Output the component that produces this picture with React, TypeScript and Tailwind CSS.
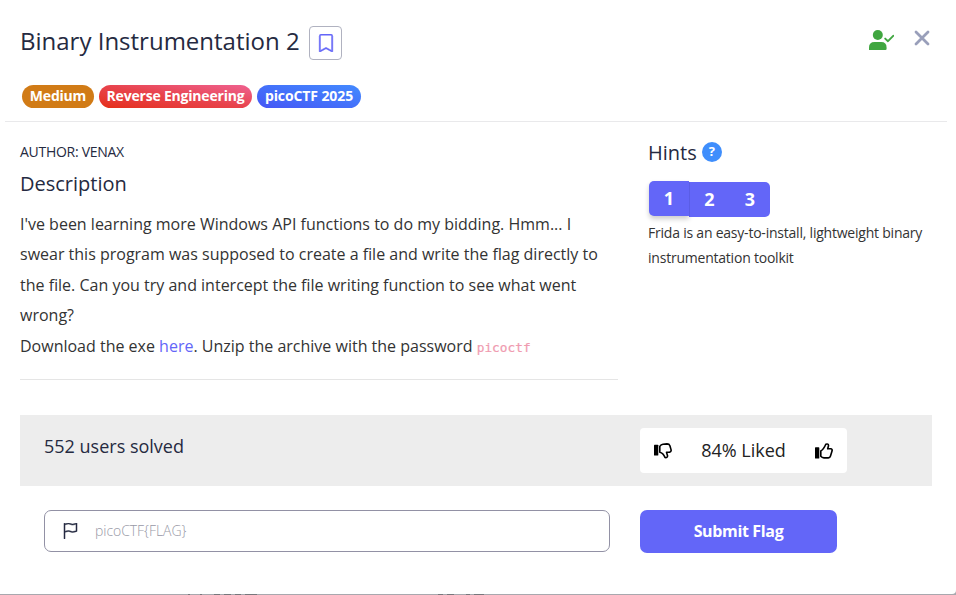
import { BsBookmark, BsFlag } from "react-icons/bs";

function PersonCheck() {
  return (
    <svg className="mt-[5px]" width="25" height="20" viewBox="0 0 25 20" fill="none">
      <circle cx="8.8" cy="5" r="5" fill="#40a640" />
      <path d="M0 20V17.5Q0 12 5.5 12H12.2Q17.6 12 17.6 17.5V18.8Q17.6 20 16.4 20Z" fill="#40a640" />
      <path d="M16.2 8.6 19 11.2 24.2 5.8" stroke="#40a640" strokeWidth="1.9" strokeLinecap="round" strokeLinejoin="round" />
    </svg>
  );
}

function ThumbDown() {
  return (
    <svg width="18" height="18" viewBox="0 0 18 18" fill="none">
      <rect x="0" y="2.7" width="4.3" height="10.8" rx="0.6" fill="#000" />
      <path
        d="M5.8 4.4Q7 2.6 9 2.3L13 1.9Q15.2 1.9 15.9 3.7L17.1 7.9Q17.4 9.7 15.7 10.1L12.5 10.3L13.6 14Q13.3 16.1 11 15.5C9.9 12.8 8.2 10.8 5.8 10.3Z"
        stroke="#000"
        strokeWidth="1.6"
        strokeLinejoin="round"
      />
    </svg>
  );
}

function ThumbUp() {
  return (
    <svg width="18" height="18" viewBox="0 0 18 18" fill="none">
      <rect x="0" y="5.3" width="4.3" height="11.3" rx="0.6" fill="#000" />
      <path
        d="M5.8 8.9C8.2 7.6 9.7 4.8 10.8 2.2Q13.6 1.4 13.5 3.7L12.7 6.8H15.7Q17.5 7 17.1 8.8L15.5 14.1Q15 15.8 13.3 15.9H9Q7 15.6 5.8 14.2Z"
        stroke="#000"
        strokeWidth="1.6"
        strokeLinejoin="round"
      />
    </svg>
  );
}

function Hints() {
  return (
    <aside className="ml-[30px] w-[290px]">
      <h2 className="mt-[19px] flex h-[24px] items-center text-[20px] text-[#252a41]">
        Hints
        <span className="mb-[2px] ml-[5px] flex h-[20px] w-[20px] items-center justify-center rounded-full bg-[#3f8efc] text-[13px] font-bold text-white">
          ?
        </span>
      </h2>
      <div className="mt-[16px] ml-px flex h-[36px] text-[18px] font-bold text-white">
        <button className="h-[35px] w-[40px] rounded-l-[5px] bg-[#6366f8] shadow-[0_3px_5px_rgba(0,0,0,0.2)]">1</button>
        <button className="mt-px h-[35px] w-[41px] bg-[#6366f8] shadow-[inset_1px_0_0_#5a5de6]">2</button>
        <button className="mt-px h-[35px] w-[40px] rounded-r-[5px] bg-[#6366f8]">3</button>
      </div>
      <p className="mt-[3px] text-[14px] leading-[25px] tracking-[-0.22px] text-[#333]">
        Frida is an easy-to-install, lightweight binary
        <br />
        instrumentation toolkit
      </p>
    </aside>
  );
}

export default function App() {
  return (
    <div className="h-[595px] w-[956px] overflow-hidden bg-[#a8a8ae] font-['Open_Sans',sans-serif] text-[#333]">
      <main className="h-[594px] rounded-br-[4px] bg-white">
        <header className="ml-[5px] h-[122px] w-[942px] border-b border-[#e9e9eb] pl-[15px]">
          <div className="flex pt-[25px]">
            <h1 className="h-[34px] w-[279px] text-[24px] leading-[32px] whitespace-nowrap text-[#252a41]">
              Binary Instrumentation 2
            </h1>
            <button className="mt-px ml-[10px] flex h-[34px] w-[33px] items-center justify-center rounded-[4px] border border-[#b0b2c0]">
              <BsBookmark size={18} color="#6366f8" stroke="#6366f8" strokeWidth={0.5} />
            </button>
            <div className="mr-[17px] ml-auto flex">
              <PersonCheck />
              <svg className="mt-[5px] ml-[20px]" width="16" height="16" viewBox="0 0 16 16" stroke="#999fba" strokeWidth="2.8" strokeLinecap="round">
                <path d="M2 2 14 14M14 2 2 14" />
              </svg>
            </div>
          </div>
          <div className="mt-[25px] ml-[2px] flex gap-[5px] text-[14px] leading-[22px] font-bold tracking-[-0.2px] text-white">
            <span className="h-[23px] w-[72px] rounded-full bg-[#d17b16] text-center">Medium</span>
            <span className="h-[23px] w-[153px] rounded-full bg-gradient-to-tr from-[#e52e12] via-[#e8434c] to-[#ef6191] text-center">
              Reverse Engineering
            </span>
            <span className="h-[23px] w-[104px] rounded-full bg-gradient-to-tr from-[#4555f5] to-[#438aff] text-center tracking-[-0.1px]">picoCTF 2025</span>
          </div>
        </header>
        <section className="flex h-[293px] pl-[20px]">
          <article className="h-[258px] w-[598px] border-b border-[#e5e5e5] text-[16px] whitespace-nowrap">
            <p className="mt-[20px] h-[20px] text-[14px] leading-[20px] tracking-[-0.28px] text-[#252a41]">AUTHOR: VENAX</p>
            <h2 className="mt-[9px] h-[26px] text-[20px] leading-[26px] text-[#252a41]">Description</h2>
            <p className="mt-[12px] leading-[30.4px]">
              I've been learning more Windows API functions to do my bidding. Hmm... I<br />
              swear this program was supposed to create a file and write the flag directly to<br />
              the file. Can you try and intercept the file writing function to see what went<br />
              wrong?<br />
              Download the exe <a className="text-[#6366f8]">here</a>. Unzip the archive with the password{" "}
              <code className="font-['DejaVu_Sans_Mono',monospace] text-[12.8px] text-[#f09bb0] [-webkit-text-stroke:0.2px_#f09bb0]">picoctf</code>
            </p>
          </article>
          <Hints />
        </section>
        <section className="ml-[20px] flex h-[71px] w-[912px] bg-[#ededed] pl-[24px]">
          <p className="w-[596px] pt-[18px] text-[18px] leading-[26px] text-[#252a41]">552 users solved</p>
          <div className="mt-[13px] flex h-[45px] w-[207px] items-center justify-between rounded-[4px] bg-white px-[14px] text-[18px] text-[#222]">
            <ThumbDown />
            <span>84% Liked</span>
            <ThumbUp />
          </div>
        </section>
        <form className="mt-[24px] ml-[44px] flex">
          <div className="flex h-[42px] w-[566px] items-center rounded-[7px] border border-[#9291a5] pl-[17px]">
            <BsFlag size={16} color="#252a41" stroke="#252a41" strokeWidth={0.5} />
            <span className="mb-[2px] ml-[17px] text-[14px] font-light tracking-[-0.05px] text-[#9899a6]">picoCTF{"{FLAG}"}</span>
          </div>
          <button type="button" className="ml-[30px] h-[43px] w-[197px] rounded-[7px] bg-[#6366f8] pb-[2px] text-[16px] font-bold tracking-[-0.35px] text-white">
            Submit Flag
          </button>
        </form>
      </main>
      {/* Page content behind the dialog, showing under its lower edge */}
      <div className="flex h-px gap-[4px] pl-[188px]">
        <i className="w-[2px] bg-[#77777c]" />
        <i className="ml-[6px] w-[2px] bg-[#77777c]" />
        <i className="ml-[8px] w-[6px] bg-[#77777c]" />
        <i className="w-[7px] bg-[#77777c]" />
        <i className="w-[6px] bg-[#77777c]" />
        <i className="w-[12px] bg-[#77777c]" />
        <i className="ml-[177px] w-[5px] bg-[#77777c]" />
        <i className="w-[7px] bg-[#77777c]" />
        <i className="ml-[8px] w-[4px] bg-[#77777c]" />
        <i className="w-[10px] bg-[#77777c]" />
      </div>
    </div>
  );
}
